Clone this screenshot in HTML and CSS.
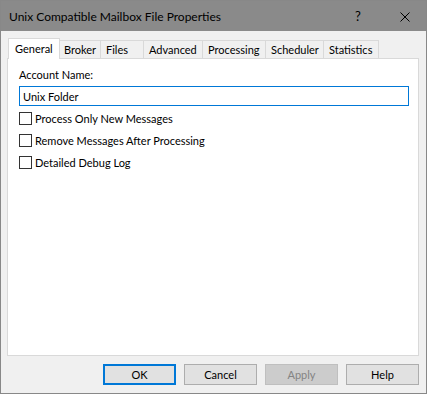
FILE: index.html
```html
<!DOCTYPE html>
<html lang="en">
<head>
  <meta charset="UTF-8">
  <meta name="viewport" content="width=device-width, initial-scale=1.0">
  <title>Unix Compatible Mailbox File Properties</title>
  <link rel="stylesheet" href="styles.css">
</head>
<body>
  <div class="window">
    <div class="titlebar">
      <span class="title">Unix Compatible Mailbox File Properties</span>
      <span class="help-btn">?</span>
      <span class="close-btn">
        <svg width="10" height="10" viewBox="0 0 10 10">
          <path d="M0.5 0.5 L9.5 9.5 M9.5 0.5 L0.5 9.5" stroke="#000" stroke-width="1" fill="none"/>
        </svg>
      </span>
    </div>

    <div class="content">
      <div class="tabs">
        <div class="tab active tab-general">General</div>
        <div class="tab tab-broker">Broker</div>
        <div class="tab tab-files">Files</div>
        <div class="tab tab-advanced">Advanced</div>
        <div class="tab tab-processing">Processing</div>
        <div class="tab tab-scheduler">Scheduler</div>
        <div class="tab tab-statistics">Statistics</div>
      </div>

      <div class="panel">
        <label class="field-label" for="accountName">Account Name:</label>
        <input class="field" type="text" id="accountName" value="Unix Folder">

        <div class="checks">
          <label class="check"><span class="box"></span>Process Only New Messages</label>
          <label class="check"><span class="box"></span>Remove Messages After Processing</label>
          <label class="check"><span class="box"></span>Detailed Debug Log</label>
        </div>
      </div>

      <div class="buttons">
        <button class="btn default">OK</button>
        <button class="btn">Cancel</button>
        <button class="btn" disabled>Apply</button>
        <button class="btn">Help</button>
      </div>
    </div>
  </div>
</body>
</html>
```
FILE: styles.css
```css
* {
  margin: 0;
  padding: 0;
  box-sizing: border-box;
}

body {
  font-family: Lato, "Liberation Sans", sans-serif;
  font-size: 11px;
  color: #000;
  background: #f0f0f0;
}

.window {
  width: 427px;
  height: 394px;
  border: 1px solid #888888;
  display: flex;
  flex-direction: column;
  background: #f0f0f0;
}

.titlebar {
  height: 30px;
  background: #8a8a8a;
  display: flex;
  align-items: center;
  padding-left: 8px;
}

.title {
  font-size: 12px;
  flex: 1;
}

.help-btn {
  font-size: 13px;
  width: 46px;
  text-align: center;
  margin-right: -1px;
}

.close-btn {
  width: 46px;
  height: 30px;
  display: flex;
  align-items: center;
  justify-content: center;
}

.close-btn svg {
  display: block;
  margin-top: 1px;
  margin-left: 3px;
}

.content {
  flex: 1;
  display: flex;
  flex-direction: column;
  padding: 7px 7px 8px 6px;
}

/* tab strip */
.tabs {
  display: flex;
  align-items: flex-end;
  height: 20px;
  margin-left: 1px;
}

.tab {
  height: 18px;
  border: 1px solid #d9d9d9;
  border-bottom: none;
  background: #f0f0f0;
  padding-left: 5px;
  line-height: 17px;
  margin-left: -1px;
  white-space: nowrap;
}

.tab:first-child {
  margin-left: 0;
}

.tab.active {
  height: 21px;
  background: #fff;
  margin-bottom: -1px;
  padding-left: 6px;
  line-height: 19px;
  position: relative;
  z-index: 1;
}

.tab-general { width: 52px; }
.tab-broker { width: 42px; padding-left: 4px; }
.tab-files { width: 44px; }
.tab-advanced { width: 60px; }
.tab-processing { width: 64px; }
.tab-scheduler { width: 59px; }
.tab-statistics { width: 56px; }

/* page body */
.panel {
  flex: 1;
  background: #fff;
  border: 1px solid #d9d9d9;
  padding: 9px 0 0 11px;
  display: flex;
  flex-direction: column;
}

.field-label {
  line-height: 14px;
}

.field {
  margin-top: 4px;
  width: 390px;
  height: 20px;
  border: 1px solid #0078d7;
  font: inherit;
  padding: 0 3px;
  outline: none;
  background: #fff;
}

.checks {
  margin-top: 6px;
  display: flex;
  flex-direction: column;
  gap: 9px;
}

.check {
  display: flex;
  align-items: center;
  height: 13px;
}

.box {
  width: 13px;
  height: 13px;
  border: 1px solid #333;
  background: #fff;
  margin-right: 3px;
}

/* dialog buttons */
.buttons {
  margin-top: 8px;
  display: flex;
  justify-content: flex-end;
  gap: 8px;
}

.btn {
  width: 73px;
  height: 21px;
  background: #e1e1e1;
  border: 1px solid #adadad;
  font: inherit;
  color: #000;
}

.btn.default {
  border: 2px solid #0078d7;
}

.btn:disabled {
  background: #cccccc;
  border-color: #bfbfbf;
  color: #838383;
}
```
